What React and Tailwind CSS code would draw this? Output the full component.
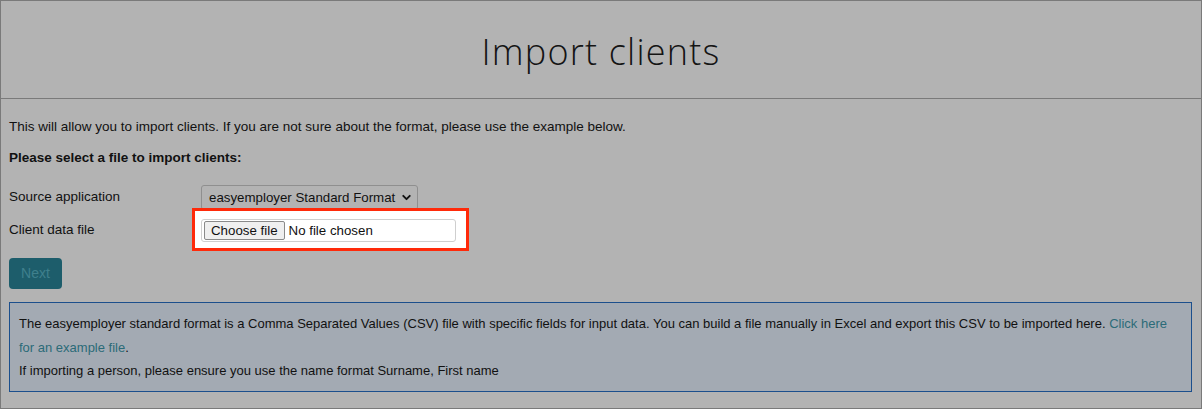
import { ChevronDown } from "lucide-react";

const FONT = { fontFamily: '"Liberation Sans", Arial, sans-serif' };

const Row = ({ label, children }) => (
  <div className="flex items-center h-[33px]">
    <div className="w-[192px] shrink-0">{label}</div>
    {children}
  </div>
);

const SourceSelect = () => (
  <div className="flex items-center justify-between w-[217px] h-[25px] border border-[#8f8f8f] rounded-[3px] pl-[7px] pr-[4px] text-[13.3px] text-[#111]">
    <span>easyemployer Standard Format</span>
    <ChevronDown size={13} strokeWidth={3.5} />
  </div>
);

const FileInput = () => (
  <div className="relative">
    {/* highlight annotation over the dimmed page */}
    <div className="absolute -left-[9px] -top-[11px] w-[277px] h-[43px] border-[3px] border-[#ff2a0a] bg-white" />
    <div className="relative flex items-center w-[255px] h-[23px] bg-white border border-[#cfcfcf] rounded-[3px] pl-[2px] text-[13.3px] text-[#111]">
      <div className="h-[19px] px-[6px] flex items-center bg-[#efefef] border border-[#8a8a8a] rounded-[2px]">
        Choose file
      </div>
      <span className="ml-[4px]">No file chosen</span>
    </div>
  </div>
);

export default function App() {
  return (
    <div
      className="w-[1202px] h-[409px] border border-[#7a7a7a] bg-[#b3b3b3] text-[#111] text-[13.5px]"
      style={FONT}
    >
      <header className="h-[98px] border-b border-[#7a7a7a] flex items-center justify-center pt-[4px]">
        <h1
          className="text-[36px] font-light text-[#141414] tracking-[1.2px]"
          style={{ fontFamily: '"Open Sans", sans-serif' }}
        >
          Import clients
        </h1>
      </header>

      <div className="px-[8px] pt-[19px]">
        <p className="leading-[17px]">
          This will allow you to import clients. If you are not sure about the format, please use the example below.
        </p>
        <p className="font-bold leading-[17px] mt-[14px]">Please select a file to import clients:</p>

        <div className="mt-[15px]">
          <Row label="Source application">
            <SourceSelect />
          </Row>
          <Row label="Client data file">
            <FileInput />
          </Row>
        </div>

        <button className="mt-[11px] w-[53px] h-[31px] rounded-[4px] bg-[#1d5d6b] text-[#3f808d] text-[14px]">
          Next
        </button>

        <div className="mt-[13px] mr-[1px] h-[90px] border border-[#1c4f8c] bg-[#a3aab3] px-[9px] pt-[9px] leading-[23.5px] text-[13px]">
          <p>
            The easyemployer standard format is a Comma Separated Values (CSV) file with specific fields for input data. You can build a file manually in Excel and export this CSV to be imported here.{" "}
            <span className="text-[#2b6b78]">Click here for an example file</span>.
          </p>
          <p>If importing a person, please ensure you use the name format Surname, First name</p>
        </div>
      </div>
    </div>
  );
}
